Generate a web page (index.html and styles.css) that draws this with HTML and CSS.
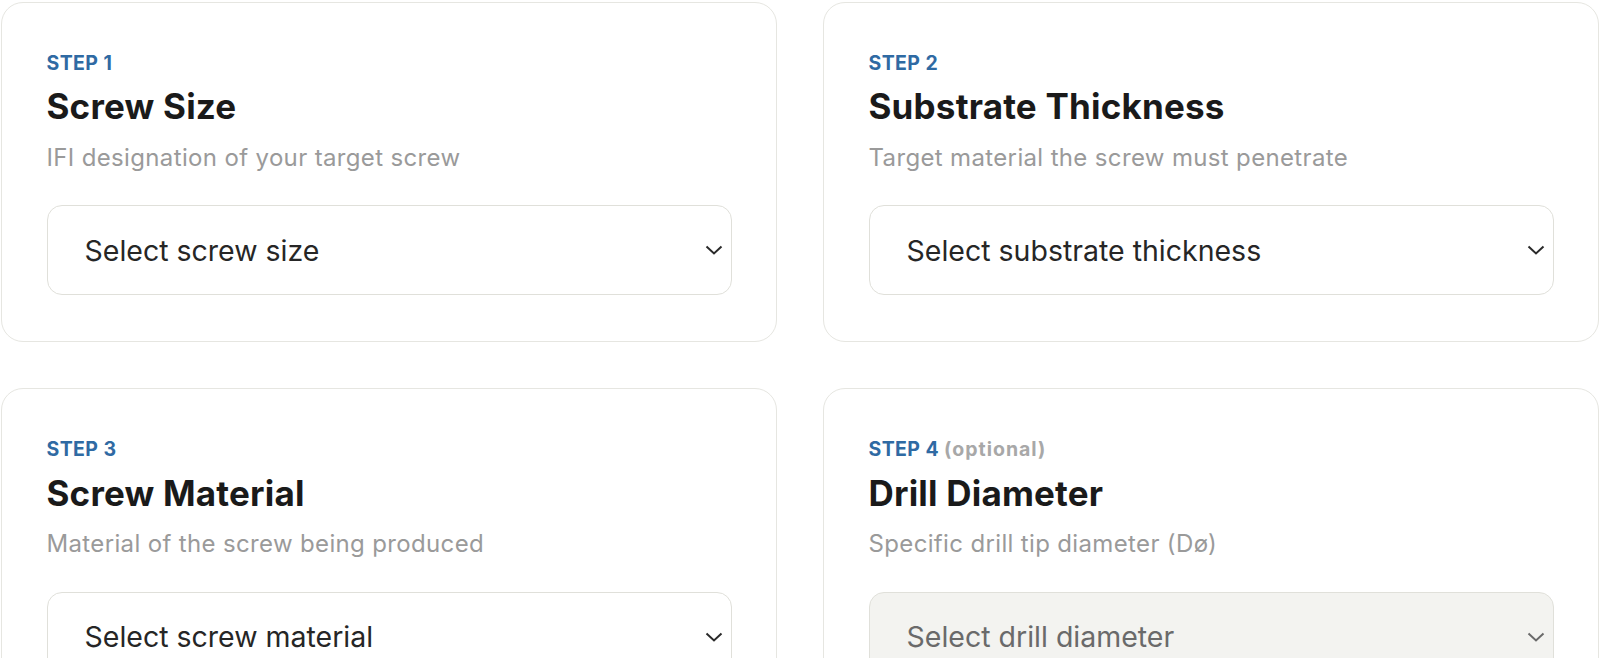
FILE: index.html
```html
<!DOCTYPE html>
<html lang="en">
<head>
    <meta charset="UTF-8">
    <meta name="viewport" content="width=device-width, initial-scale=1.0">
    <title>Drill Point Selector</title>
    <link rel="stylesheet" href="styles.css">
</head>
<body>
    <div class="steps">
        <div class="step-card">
            <div class="step-label">STEP 1</div>
            <h2 class="step-title">Screw Size</h2>
            <p class="step-desc">IFI designation of your target screw</p>
            <div class="select-wrap">
                <select class="step-select">
                    <option>Select screw size</option>
                </select>
                <svg class="chevron" viewBox="0 0 18 10" width="18" height="10"><path d="M1.5 1.5l7.5 7 7.5-7" fill="none" stroke="#2a2a2a" stroke-width="2"/></svg>
            </div>
        </div>

        <div class="step-card">
            <div class="step-label">STEP 2</div>
            <h2 class="step-title">Substrate Thickness</h2>
            <p class="step-desc">Target material the screw must penetrate</p>
            <div class="select-wrap">
                <select class="step-select">
                    <option>Select substrate thickness</option>
                </select>
                <svg class="chevron" viewBox="0 0 18 10" width="18" height="10"><path d="M1.5 1.5l7.5 7 7.5-7" fill="none" stroke="#2a2a2a" stroke-width="2"/></svg>
            </div>
        </div>

        <div class="step-card">
            <div class="step-label">STEP 3</div>
            <h2 class="step-title">Screw Material</h2>
            <p class="step-desc">Material of the screw being produced</p>
            <div class="select-wrap">
                <select class="step-select">
                    <option>Select screw material</option>
                </select>
                <svg class="chevron" viewBox="0 0 18 10" width="18" height="10"><path d="M1.5 1.5l7.5 7 7.5-7" fill="none" stroke="#2a2a2a" stroke-width="2"/></svg>
            </div>
        </div>

        <div class="step-card">
            <div class="step-label">STEP 4 <span class="optional">(optional)</span></div>
            <h2 class="step-title">Drill Diameter</h2>
            <p class="step-desc">Specific drill tip diameter (Dø)</p>
            <div class="select-wrap">
                <select class="step-select" disabled>
                    <option>Select drill diameter</option>
                </select>
                <svg class="chevron" viewBox="0 0 18 10" width="18" height="10"><path d="M1.5 1.5l7.5 7 7.5-7" fill="none" stroke="#6a6a6a" stroke-width="2"/></svg>
            </div>
        </div>
    </div>
</body>
</html>
```

FILE: styles.css
```css
* {
    margin: 0;
    padding: 0;
    box-sizing: border-box;
}

body {
    font-family: 'Inter', 'Liberation Sans', sans-serif;
    background: #fff;
    padding: 2px 0 0 1px;
}

.steps {
    display: grid;
    grid-template-columns: 776px 776px;
    column-gap: 46px;
    row-gap: 46px;
}

.step-card {
    background: #fff;
    border: 1.5px solid #e6e6e1;
    border-radius: 22px;
    padding: 46px 44.5px 46px 44.5px;
}

.step-label {
    font-size: 19.5px;
    font-weight: 700;
    color: #2f6aa3;
    letter-spacing: 0.4px;
    line-height: 28px;
}

.step-label .optional {
    color: #a8a8a8;
    font-weight: 700;
    letter-spacing: 1px;
}

.step-title {
    font-size: 35px;
    font-weight: 700;
    color: #1a1a1a;
    letter-spacing: 0.2px;
    line-height: 42px;
    margin-top: 8.4px;
}

.step-desc {
    font-size: 24px;
    color: #9a9a9a;
    letter-spacing: 0.35px;
    line-height: 32px;
    margin-top: 14.5px;
}

.select-wrap {
    position: relative;
    margin-top: 31.5px;
}

.step-select {
    appearance: none;
    -webkit-appearance: none;
    width: 100%;
    height: 90px;
    padding: 0 37px;
    font-family: inherit;
    font-size: 28.5px;
    color: #262626;
    background: #fff;
    border: 1.5px solid #e0e0da;
    border-radius: 15px;
    outline: none;
}

.step-select:disabled {
    background: #f3f3f0;
    color: #6a6a6a;
    opacity: 1;
}

.chevron {
    position: absolute;
    right: 9px;
    top: 40px;
    pointer-events: none;
}
```
